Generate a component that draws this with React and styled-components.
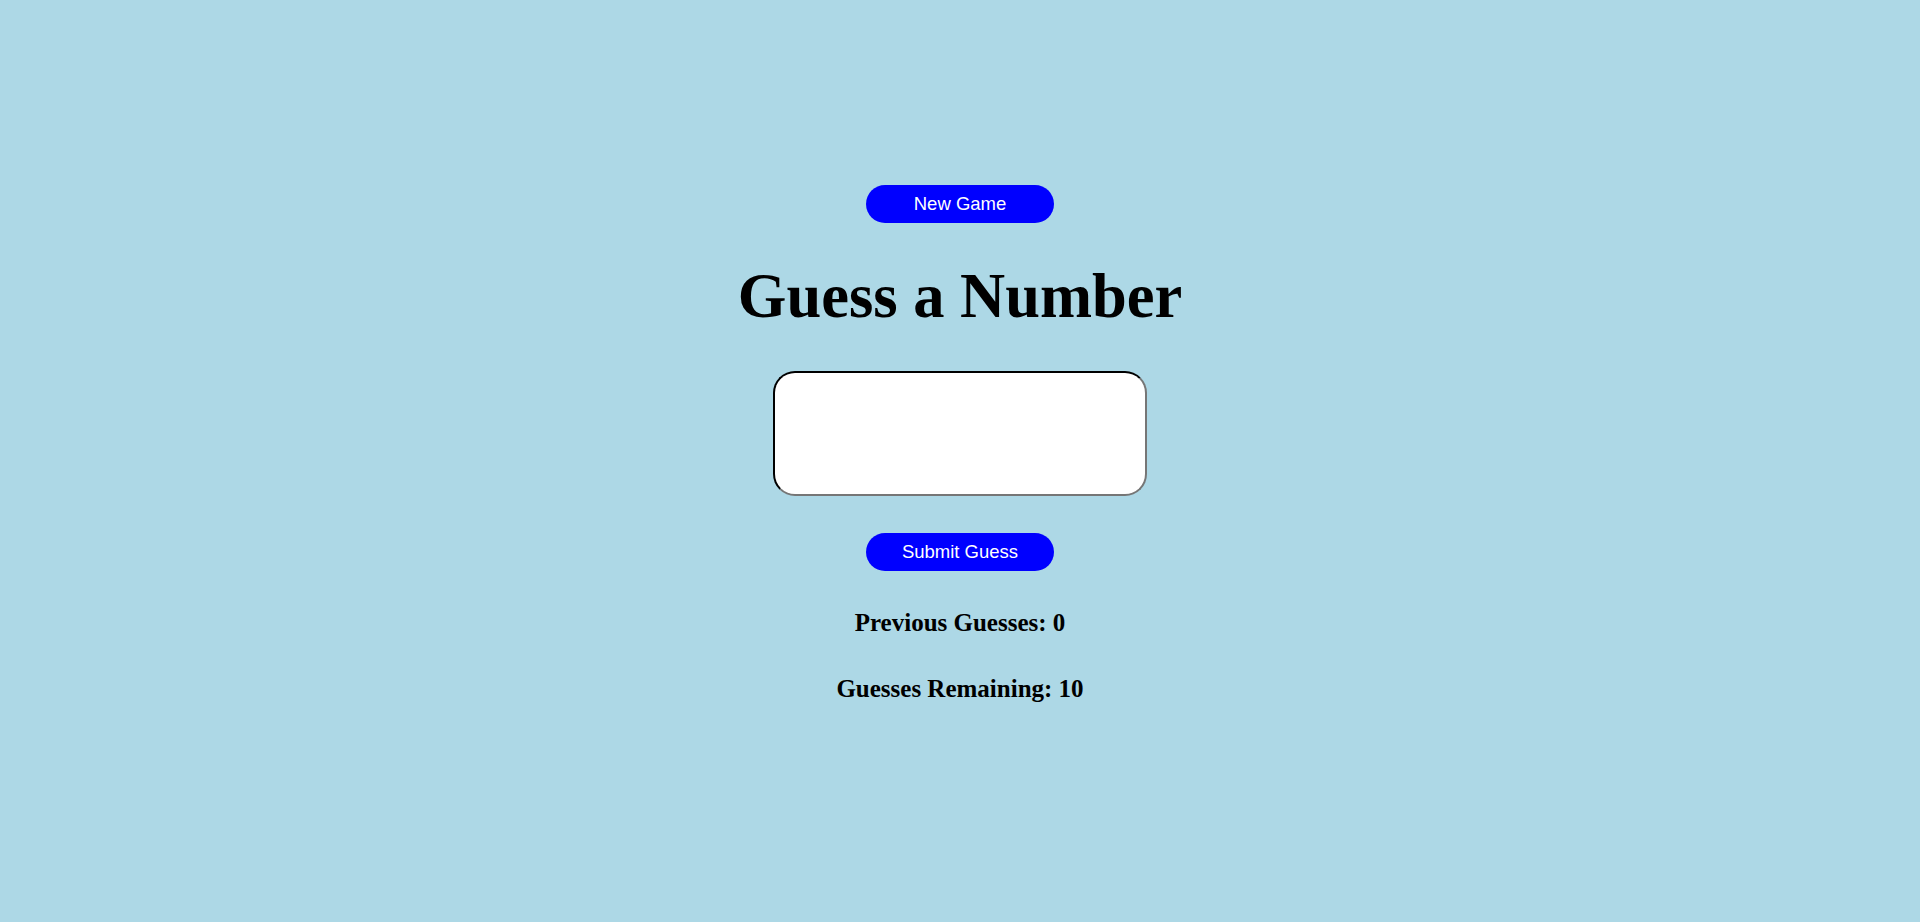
import React, { useState } from 'react'
import styled, { createGlobalStyle } from 'styled-components'

const GlobalStyle = createGlobalStyle`
    html, body {
        margin: 0;
        padding: 0;
        background-color: lightblue;
    }
    body {
        font-family: "Liberation Serif", "Times New Roman", serif;
        min-height: 922px;
    }
`

const App = () => {
    const [guess, setGuess] = useState('')
    const [previous, setPrevious] = useState([])
    const remaining = 10 - previous.length

    const submit = () => {
        if (guess === '' || remaining <= 0) return
        setPrevious([...previous, guess])
        setGuess('')
    }

    const reset = () => {
        setPrevious([])
        setGuess('')
    }

  return (
    <>
        <GlobalStyle/>
        <Container>
            <Button onClick={reset}>New Game</Button>
            <Title>Guess a Number</Title>
            <GuessInput value={guess} onChange={(e)=>setGuess(e.target.value)}/>
            <Button onClick={submit}>Submit Guess</Button>
            <Stat>Previous Guesses: {previous.length ? previous.join(', ') : 0}</Stat>
            <Stat>Guesses Remaining: {remaining}</Stat>
        </Container>
    </>
  )
}

const Container = styled.div`
    display: flex;
    flex-direction: column;
    align-items: center;
    padding-top: 185px;
`

const Button = styled.button`
    width: 188px;
    height: 38px;
    border: none;
    border-radius: 19px;
    background-color: blue;
    color: white;
    font-family: "Liberation Sans", Arial, sans-serif;
    font-size: 18.5px;
    cursor: pointer;
`

const Title = styled.h1`
    font-size: 62.5px;
    font-weight: bold;
    margin: 37px 0 38px;
    line-height: normal;
`

const GuessInput = styled.input`
    box-sizing: border-box;
    width: 374px;
    height: 125px;
    border: 2px inset #767676;
    border-top-color: #1a1a1a;
    border-left-color: #1a1a1a;
    border-radius: 22px;
    background: white;
    margin-bottom: 37px;
    font-size: 40px;
    text-align: center;
    outline: none;
`

const Stat = styled.h2`
    font-size: 25px;
    font-weight: bold;
    margin: 38px 0 0;
    line-height: normal;
    & + & {
        margin-top: 38px;
    }
`

export default App
